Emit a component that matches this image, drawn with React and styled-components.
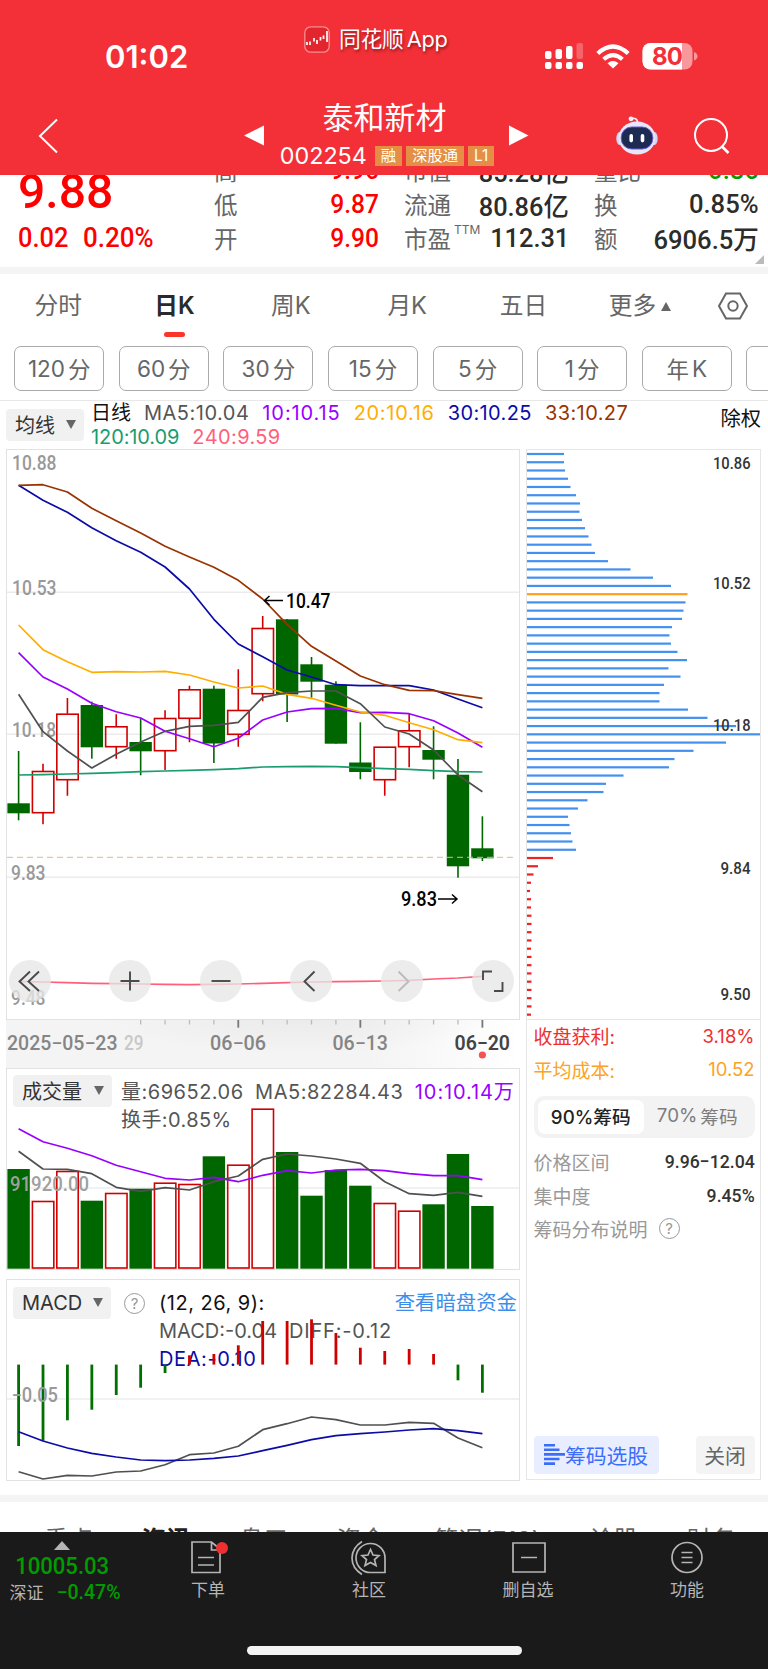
import React from 'react';
import styled, { createGlobalStyle } from 'styled-components';

const GlobalStyle = createGlobalStyle`
    * {
        box-sizing: border-box;
    }
    body {
        margin: 0;
        background: #fff;
        font-family: Inter, "Noto Sans CJK SC", sans-serif;
        color: #333;
    }
`;

const UP = '#d10000';
const DOWN = '#006600';

// x of the first candle and distance between candles
const FIRST_X = 18.6;
const STEP = 24.41;
const candleX = (i) => FIRST_X + i * STEP;

// [direction, high, top of body, bottom of body, low]
const candles = [
    ['down', 751, 803.3, 813.3, 820.3],
    ['up', 763.7, 771, 812.7, 824.3],
    ['up', 698, 713.7, 779.7, 795.7],
    ['down', 701.7, 705, 747.3, 758.7],
    ['up', 714.3, 726.3, 746.7, 758.7],
    ['down', 718.3, 742, 751.3, 775.3],
    ['up', 710.3, 718, 750.7, 770],
    ['up', 685.7, 689.3, 718.3, 742.3],
    ['down', 685.7, 688.7, 743.5, 763],
    ['up', 669.3, 710, 734.3, 746.7],
    ['up', 616, 628, 693.7, 701.3],
    ['down', 619, 619.3, 694.5, 722],
    ['down', 657, 664.3, 681.7, 697.7],
    ['down', 681.3, 684.7, 743.7, 743.7],
    ['down', 722.3, 762.5, 772, 779.3],
    ['up', 746.7, 746.7, 779.7, 795.7],
    ['up', 713.7, 730.3, 746.7, 767.3],
    ['down', 726.3, 750, 759.7, 779.3],
    ['down', 759, 774.7, 866.3, 877.7],
    ['down', 816.3, 848.3, 858.3, 861],
];

const averages = [
    { color: '#9900ff', y: [652.7, 677, 689, 703.3, 711.7, 718, 731.3, 738.7, 746.7, 738.3, 720, 712, 708.7, 708.3, 712.7, 712.3, 713.7, 720.7, 733, 747.3] },
    { color: '#1a9c6e', y: [775, 774.7, 774, 773.3, 772.7, 771.7, 771, 770.3, 769.7, 768.7, 767, 766.7, 766.3, 766.7, 767.7, 768.7, 769.3, 770.7, 771.7, 772] },
    { color: '#0b0ba8', y: [485.3, 500.3, 512.3, 527.7, 540.7, 552.3, 567, 589, 619.3, 644, 656.7, 670, 677, 684.7, 685.7, 685.7, 685.7, 690, 699, 707.7] },
    { color: '#993300', y: [485.3, 484.7, 492, 508.3, 520.7, 533, 546.3, 557, 567.3, 580.3, 599, 624.3, 646.3, 661, 676, 684.7, 690.3, 690.7, 694.7, 698.3] },
    { color: '#ffae00', y: [625, 649.7, 661.7, 672.3, 671.7, 672, 671.3, 675, 682, 688, 686, 694.3, 698.3, 705.3, 712, 715.3, 722.7, 729.7, 739.7, 742.7] },
    { color: '#505050', y: [694.3, 731.7, 751, 768, 754.3, 742, 731.3, 726.3, 725.3, 722.3, 697.3, 692.7, 691, 691, 703.7, 727, 734, 750, 775, 791.7] },
    { color: '#ff5f7a', y: [981.3, 982, 982.7, 983.3, 983.7, 984, 984.3, 984.7, 984.3, 984, 983.3, 982.7, 982, 981.7, 981.3, 981, 980.3, 979, 978, 976.3] },
];

const volumes = [
    ['down', 1169], ['up', 1201], ['up', 1171], ['down', 1200.7], ['up', 1193],
    ['down', 1188.7], ['up', 1182.7], ['up', 1184], ['down', 1156.3], ['up', 1164.7],
    ['up', 1108.7], ['down', 1152], ['down', 1195.7], ['down', 1170], ['down', 1185.7],
    ['up', 1203], ['up', 1210.7], ['down', 1204.3], ['down', 1154], ['down', 1206],
];
const volumeMa10 = [1128.7, 1141.7, 1148.3, 1155.7, 1165.3, 1171.7, 1178.3, 1180, 1177.3, 1181.7, 1175.3, 1170.7, 1173, 1170, 1169.3, 1170.7, 1173.7, 1175.7, 1175.7, 1179.7];
const volumeMa5 = [1151.3, 1169, 1169.3, 1173.7, 1187.3, 1191.3, 1187.7, 1190, 1181.7, 1176, 1159.3, 1154, 1156, 1159, 1163.3, 1181.7, 1193.7, 1195.3, 1192.3, 1196.3];

const macdEnds = [1446, 1440.7, 1420.3, 1409.7, 1395, 1387.7, 1373, 1355.3, 1354, 1345.3, 1321, 1321, 1319.3, 1333, 1347.7, 1351, 1349, 1354, 1380.3, 1392.7];
const diff = [1471.7, 1479, 1475.3, 1476, 1472, 1471, 1464.7, 1454.7, 1453, 1446.3, 1429.7, 1423.7, 1417, 1419.7, 1425, 1425, 1422.3, 1423.3, 1438, 1447.7];
const dea = [1431.7, 1441, 1448, 1453.3, 1457, 1460, 1460.7, 1460, 1458.3, 1456, 1450.7, 1445.3, 1439.7, 1435.7, 1433.7, 1432, 1430, 1428.7, 1430.7, 1433.7];

const chips = [
    37, 37, 38, 41, 43.5, 49, 53, 52.5, 55, 58, 61.5, 64.5, 68, 81, 103.5, 126, 144, 160.5, 158.5, 156.5,
    155, 145, 142.5, 144, 150.5, 160, 141.5, 153.5, 137, 132.5, 132.5, 161, 180.5, 209, 234, 199, 166.5,
    147.5, 142, 96.5, 79, 76.5, 60.5, 51, 41, 42.5, 44, 45.5, 49, 26, 11, 6.5, 4, 3, 4, 4, 4.5, 4.5, 4.5,
    4.5, 4, 4.5, 4.5, 4.5, 4.5, 4.5, 4.5, 4.5, 4,
];
const AVG_COST_INDEX = 17;
const FIRST_PROFIT_INDEX = 49;

const chipColor = (i) => {
    if (i === AVG_COST_INDEX) return '#ff9f1a';
    return i >= FIRST_PROFIT_INDEX ? '#ee2424' : '#4390ef';
};

const quoteColumns = [
    { width: 164.5, start: 22, stretch: 0.92, rows: [['高', '9.96', '#fe0000'], ['低', '9.87', '#fe0000'], ['开', '9.90', '#fe0000']] },
    { width: 165, start: 25.5, stretch: 0.95, rows: [['市值', '85.28亿'], ['流通', '80.86亿'], ['市盈', '112.31', '', 'TTM']] },
    { width: 165, start: 25, stretch: 0.96, rows: [['量比', '0.86', '#009c00'], ['换', '0.85%'], ['额', '6906.5万']] },
];

const Page = styled.div`
    display: flex;
    flex-direction: column;
    width: 768px;
    height: 1669px;
    overflow: hidden;
    background: #fff;
`;

// Narrow numerals
const Din = styled.span`
    display: inline-block;
    font-family: Roboto, "Noto Sans CJK SC", sans-serif;
    font-weight: 500;
    white-space: nowrap;
    transform: scaleX(${(p) => p.$k || 0.9});
    transform-origin: ${(p) => p.$from || 'left'} center;
`;

const Header = styled.header`
    height: 175px;
    background: #f33038;
    color: #fff;
    flex: none;
`;

const StatusBar = styled.div`
    display: flex;
    height: 92px;
    padding-left: 105px;
`;

const Clock = styled.div`
    width: 199px;
    padding-top: 22px;
    font-size: 31px;
    line-height: 70px;
    font-weight: 600;
`;

const AppBadge = styled.div`
    display: flex;
    align-items: center;
    height: 52px;
    margin-top: 13px;
    width: 240px;
    gap: 9px;
    font-size: 21.8px;
    letter-spacing: -0.3px;
    word-spacing: -2.5px;
    line-height: 26px;
    text-shadow: 1px 2px 3px rgba(80, 0, 0, 0.6);
`;

const StatusIcons = styled.svg`
    margin-top: 38px;
`;

const NavBar = styled.div`
    display: flex;
    align-items: center;
    height: 83px;
`;

const BackButton = styled.div`
    display: flex;
    width: 243px;
    padding: 5px 0 0 38px;
`;

const StockTitle = styled.div`
    width: 244px;
    display: flex;
    flex-direction: column;
    align-items: center;
    align-self: flex-start;
`;

const StockName = styled.div`
    font-size: 31px;
    line-height: 36px;
    padding: 8px 5px 0 0;
    height: 46px;
`;

const StockCode = styled.div`
    display: flex;
    align-items: center;
    gap: 4px;
    font-size: 23.3px;
    line-height: 26px;
    height: 36px;
    & > span:first-child {
        margin-right: 4px;
    }
`;

const Tag = styled.span`
    background: #e48f45;
    font-size: 15.3px;
    line-height: 19px;
    height: 20px;
    padding: 0 6px;
`;

const NavIcons = styled.div`
    display: flex;
    align-items: center;
    padding: 5px 0 0 87px;
    gap: 36px;
`;

const Quote = styled.section`
    display: flex;
    position: relative;
    height: 92px;
    overflow: hidden;
    flex: none;
`;

const QuoteMain = styled.div`
    width: 192px;
    color: #fe0000;
    padding-left: 18px;
    flex: none;
`;

const LastPrice = styled.div`
    height: 50px;
    margin-top: -12px;
    font-size: 49px;
    line-height: 56px;
`;

const Change = styled.div`
    display: flex;
    margin-top: 9px;
    font-size: 27px;
    line-height: 33px;
    & > span:first-child {
        width: 65px;
    }
`;

const QuoteColumn = styled.div`
    width: ${(p) => p.$width}px;
    margin: -21.5px 0 0 ${(p) => p.$start}px;
    flex: none;
`;

const QuoteRow = styled.div`
    display: flex;
    align-items: center;
    justify-content: space-between;
    height: 33.7px;
    font-size: 23.5px;
    color: #666;
    sup {
        font-size: 12px;
        font-weight: 400;
        align-self: flex-start;
        line-height: 17px;
        margin-right: auto;
        padding-left: 3px;
    }
    ${Din} {
        font-size: 26.7px;
        color: ${(p) => p.$color || '#2c2c2c'};
        margin-left: -20px;
    }
`;

const Corner = styled.i`
    position: absolute;
    right: 4px;
    bottom: 3px;
    border-left: 9px solid transparent;
    border-bottom: 9px solid #bbb;
`;

const Band = styled.div`
    height: 7px;
    background: #f4f4f4;
    flex: none;
`;

const PeriodTabs = styled.nav`
    display: flex;
    align-items: center;
    height: 64px;
    flex: none;
`;

const PeriodTab = styled.div`
    width: 116.4px;
    height: 64px;
    display: flex;
    flex-direction: column;
    align-items: center;
    padding-top: 15px;
    font-size: 23.7px;
    line-height: 34px;
    color: ${(p) => (p.$active ? '#2a2a2a' : '#666')};
    font-weight: ${(p) => (p.$active ? 600 : 400)};
    &::after {
        content: '';
        width: 21px;
        height: 5px;
        margin-top: 9px;
        border-radius: 3px;
        background: ${(p) => (p.$active ? '#fb3529' : 'transparent')};
    }
`;

const More = styled.div`
    display: flex;
    align-items: center;
    gap: 5px;
`;

const Triangle = styled.i`
    border: ${(p) => p.$size || 5.5}px solid transparent;
    ${(p) => (p.$up ? 'border-top: 0' : 'border-bottom: 0')};
    border-${(p) => (p.$up ? 'bottom' : 'top')}: ${(p) => p.$h || 9}px solid ${(p) => p.$color || '#666'};
`;

const MinuteRow = styled.div`
    display: flex;
    gap: 14.6px;
    height: 63px;
    padding: 8px 0 0 14.2px;
    border-bottom: 1px solid #e8e8e8;
    overflow: hidden;
    flex: none;
`;

const MinutePill = styled.div`
    width: 90px;
    height: 45px;
    flex: none;
    border: 1px solid #aaa;
    border-radius: 7px;
    display: flex;
    align-items: center;
    justify-content: center;
    gap: 3px;
    padding-bottom: 1px;
    font-size: 22.5px;
    color: #666;
`;

const AverageBar = styled.div`
    display: flex;
    height: 48px;
    padding-left: 6px;
    flex: none;
`;

const Picker = styled.div`
    display: flex;
    align-items: center;
    justify-content: space-between;
    width: ${(p) => p.$width}px;
    height: 32px;
    margin-top: ${(p) => p.$top || 0}px;
    padding: 0 8px 1px 9px;
    border-radius: 4px;
    background: #f1f1f1;
    font-size: 20px;
    color: #333;
    flex: none;
`;

const AverageValues = styled.div`
    display: flex;
    flex-wrap: wrap;
    width: 610px;
    column-gap: 13px;
    padding-left: 7px;
    font-size: 20px;
    line-height: 24px;
`;

const Value = styled.span`
    color: ${(p) => p.$color || '#555'};
    letter-spacing: ${(p) => p.$spacing || 0}px;
    white-space: nowrap;
`;

const Rights = styled.div`
    margin-left: auto;
    padding-right: 7px;
    font-size: 20.3px;
    line-height: 35px;
    color: #111;
`;

const Charts = styled.main`
    display: grid;
    grid-template-columns: 514px 235px;
    column-gap: 6px;
    height: 1046px;
    padding-left: 6px;
    flex: none;
    align-items: start;
`;

const Panel = styled.section`
    position: relative;
    height: ${(p) => p.$height}px;
    border: 1px solid #e2e2e2;
    margin-top: ${(p) => p.$gap || 0}px;
`;

const Plot = styled.svg`
    position: absolute;
    left: -1px;
    top: -1px;
    font-family: Roboto, sans-serif;
    font-size: 19.5px;
`;

const Controls = styled.div`
    position: absolute;
    left: 2px;
    right: 5px;
    bottom: 17px;
    display: flex;
    justify-content: space-between;
`;

const ControlButton = styled.div`
    width: 42px;
    height: 42px;
    border-radius: 50%;
    background: rgba(231, 231, 231, 0.78);
    color: ${(p) => (p.$muted ? '#bbb' : '#4a4a4a')};
    margin-left: ${(p) => p.$shift || 0}px;
`;

const DateAxis = styled.div`
    height: 48px;
    background: radial-gradient(ellipse 190px 34px at 290px 0, #ebebeb, rgba(240, 240, 240, 0)), linear-gradient(90deg, #f4f4f4 70%, #fff);
    svg {
        display: block;
        font-family: Roboto, sans-serif;
        font-size: 19.5px;
    }
`;

const IndicatorHead = styled.div`
    position: relative;
    display: flex;
    align-items: flex-start;
    padding: ${(p) => p.$top}px 1px 0 6px;
`;

const IndicatorValues = styled.div`
    display: flex;
    flex-wrap: wrap;
    flex: 1;
    column-gap: ${(p) => p.$gap || 12}px;
    padding-left: ${(p) => p.$left || 9}px;
    margin: ${(p) => p.$top || 0}px ${(p) => p.$right || 0}px 0 0;
    font-size: 20px;
    line-height: 28px;
`;

const Break = styled.i`
    flex-basis: 100%;
`;

const HelpMark = styled.span`
    width: 21px;
    height: 21px;
    border: 1.5px solid #999;
    border-radius: 50%;
    color: #999;
    font-size: 15px;
    line-height: 19px;
    text-align: center;
    flex: none;
    margin: ${(p) => p.$margin};
`;

const DarkPool = styled.span`
    font-size: 20.4px;
    line-height: 28px;
    color: #3d8eea;
    margin-left: auto;
    padding-right: 1px;
`;

const ChipPanel = styled.aside`
    position: relative;
    display: flex;
    flex-direction: column;
    height: 1031px;
    border: 1px solid #e6e6e6;
`;

const ChipProfile = styled.div`
    height: 570px;
    border-bottom: 1px solid #e6e6e6;
    svg {
        display: block;
        font-family: Roboto, sans-serif;
        font-size: 17.3px;
    }
`;

const ChipStats = styled.div`
    display: flex;
    flex-direction: column;
    flex: 1;
    padding: 0 5.5px 5px 6.5px;
`;

const StatRow = styled.div`
    display: flex;
    align-items: center;
    justify-content: ${(p) => (p.$start ? 'flex-start' : 'space-between')};
    height: 33.4px;
    padding-bottom: 1.5px;
    font-size: 19px;
    color: ${(p) => p.$color || '#999'};
    span:last-child {
        font-size: ${(p) => p.$valueSize || 18.5}px;
    }
    ${Din} {
        color: #333;
    }
`;

const Segmented = styled.div`
    display: flex;
    height: 42px;
    padding: 4px;
    margin: 9px 0 8px;
    border-radius: 10px;
    background: #f3f3f3;
    font-size: 18.7px;
`;

const Segment = styled.div`
    width: 107px;
    display: flex;
    align-items: center;
    justify-content: center;
    padding-bottom: 3px;
    gap: ${(p) => (p.$active ? 0 : 3)}px;
    border-radius: 7px;
    background: ${(p) => (p.$active ? '#fff' : 'transparent')};
    color: ${(p) => (p.$active ? '#222' : '#7d7d7d')};
    font-weight: ${(p) => (p.$active ? 500 : 400)};
`;

const ChipActions = styled.div`
    display: flex;
    justify-content: space-between;
    margin-top: auto;
`;

const ActionButton = styled.div`
    display: flex;
    align-items: center;
    justify-content: center;
    width: ${(p) => p.$width}px;
    height: 38px;
    padding-bottom: 1px;
    border-radius: 4px;
    font-size: 20.8px;
    background: ${(p) => (p.$primary ? '#e8eeff' : '#f4f4f4')};
    color: ${(p) => (p.$primary ? '#3b6dfa' : '#666')};
`;

const NewsTabs = styled.div`
    display: flex;
    gap: 48.5px;
    height: 30px;
    padding: 20.5px 0 0 44px;
    overflow: hidden;
    font-size: 24.5px;
    line-height: 34px;
    color: #666;
    white-space: nowrap;
    flex: none;
    b {
        color: #222;
        font-weight: 700;
    }
`;

const BottomBar = styled.footer`
    position: relative;
    display: flex;
    height: 137px;
    background: #1a1a1a;
    color: #b5b5b5;
    flex: none;
`;

const IndexBox = styled.div`
    width: 128px;
    display: flex;
    flex-direction: column;
    align-items: center;
    padding: 9px 4px 0 0;
    color: #009c00;
`;

const IndexValue = styled(Din)`
    font-size: 24.5px;
    line-height: 30px;
    margin-top: 1px;
`;

const IndexChange = styled.div`
    display: flex;
    align-items: center;
    gap: 13px;
    font-size: 17px;
    line-height: 24px;
    color: #b5b5b5;
    padding-left: 6px;
    ${Din} {
        font-size: 19.5px;
        color: #009c00;
    }
`;

const BarItem = styled.div`
    width: ${(p) => p.$width}px;
    display: flex;
    flex-direction: column;
    align-items: center;
    padding-top: 7px;
    font-size: 17px;
    line-height: 27px;
`;

const HomeIndicator = styled.i`
    position: absolute;
    left: 247px;
    bottom: 14px;
    width: 275px;
    height: 9px;
    border-radius: 5px;
    background: #f4f4f4;
`;

function Curve({ points, color, width = 1.7 }) {
    const d = points.map((y, i) => `${candleX(i).toFixed(1)},${y}`).join(' ');
    return <polyline points={d} fill="none" stroke={color} strokeWidth={width} strokeLinejoin="round" />;
}

function PlotText({ x, y, w, color = '#999', weight = 500, children }) {
    return (
        <text x={x} y={y} textLength={w} lengthAdjust="spacingAndGlyphs" fill={color} fontWeight={weight}>
            {children}
        </text>
    );
}

function Candle({ index, data }) {
    const [dir, high, top, bottom, low] = data;
    const x = candleX(index);
    if (dir === 'down') {
        return (
            <g fill={DOWN}>
                <rect x={x - 0.8} y={high} width="1.6" height={low - high} />
                <rect x={x - 11.2} y={top} width="22.4" height={bottom - top} />
            </g>
        );
    }
    return (
        <g fill="none" stroke={UP} strokeWidth="1.6">
            <path d={`M${x} ${high}V${top}M${x} ${bottom}V${low}`} />
            <rect x={x - 10.6} y={top + 0.5} width="21.4" height={bottom - top - 0.5} />
        </g>
    );
}

function PriceChart() {
    return (
        <Panel $height={571}>
            <Plot width="514" height="571" viewBox="6 449 514 571">
                <path d="M7 592.3H519M7 734.3H519M7 877.3H519" stroke="#ececec" strokeWidth="1.4" />
                <PlotText x={12} y={737} w={44}>10.18</PlotText>
                {candles.map((c, i) => <Candle key={i} index={i} data={c} />)}
                {averages.map((a) => <Curve key={a.color} points={a.y} color={a.color} />)}
                <path d="M7 857.3H515" stroke="#d9b896" strokeWidth="1" strokeDasharray="6 4" />
                <PlotText x={12} y={470} w={44.5}>10.88</PlotText>
                <PlotText x={12} y={595} w={44.5}>10.53</PlotText>
                <PlotText x={11} y={879.5} w={34.5}>9.83</PlotText>
                <PlotText x={11} y={1004.5} w={34.5}>9.48</PlotText>
                <path d="M283 600.5H265M269.5 596L264.5 600.5L269.5 605" fill="none" stroke="#000" strokeWidth="1.5" />
                <PlotText x={286} y={607.5} w={44.5} color="#000">10.47</PlotText>
                <path d="M438 899H456.5M452 894.5L457 899L452 903.5" fill="none" stroke="#000" strokeWidth="1.5" />
                <PlotText x={401} y={906} w={36} color="#000">9.83</PlotText>
            </Plot>
            <Controls>
                {['rewind', 'plus', 'minus', 'prev', 'next', 'full'].map((name) => (
                    <ControlButton key={name} $muted={name === 'next'} $shift={name === 'plus' ? 9 : 0}>
                        <ControlIcon name={name} />
                    </ControlButton>
                ))}
            </Controls>
        </Panel>
    );
}

function ControlIcon({ name }) {
    const paths = {
        rewind: 'M21 11.5L10.5 21.5L21 31M30 11.5L19.5 21.5L30 31',
        plus: 'M11.5 21H30.5M21 11.5V30.5',
        minus: 'M11.5 21H30.5',
        prev: 'M24.5 11.5L14.5 21.5L24.5 31',
        next: 'M17.5 11.5L27.5 21.5L17.5 31',
        full: 'M11 20V11.5H20M30.5 22V31H22',
    };
    return (
        <svg width="42" height="42" viewBox="0 0 42 42" fill="none" stroke="currentColor" strokeWidth="1.9">
            <path d={paths[name]} />
        </svg>
    );
}

function Dates() {
    return (
        <DateAxis>
            <svg width="514" height="48" viewBox="6 1020 514 48">
                {candles.map((c, i) => {
                    if (i < 5) return null;
                    const major = i === 9 || i === 14 || i === 19;
                    return (
                        <path
                            key={i}
                            d={`M${candleX(i)} 1020V${major ? 1027.7 : 1024.5}`}
                            stroke={major ? '#777' : '#bbb'}
                            strokeWidth={major ? 1.8 : 1.3}
                        />
                    );
                })}
                <PlotText x={7} y={1049.7} w={110.5} color="#858585">2025−05−23</PlotText>
                <PlotText x={124} y={1049.7} w={19.5} color="#c8c8c8">29</PlotText>
                <PlotText x={210} y={1049.7} w={56} color="#858585">06−06</PlotText>
                <PlotText x={332.5} y={1049.7} w={55.5} color="#858585">06−13</PlotText>
                <PlotText x={454.5} y={1049.7} w={55.5} color="#444" weight={600}>06−20</PlotText>
                <circle cx="482.4" cy="1055" r="3.6" fill="#f25555" />
            </svg>
        </DateAxis>
    );
}

function VolumeChart() {
    return (
        <Panel $height={202}>
            <Plot width="514" height="202" viewBox="6 1068 514 202">
                <path d="M7 1188H519" stroke="#ececec" strokeWidth="1.4" />
                {volumes.map(([dir, top], i) => (
                    dir === 'down'
                        ? <rect key={i} x={candleX(i) - 11.2} y={top} width="22.4" height={1268.7 - top} fill={DOWN} />
                        : <rect key={i} x={candleX(i) - 10.6} y={top + 0.5} width="21.4" height={1267.5 - top} fill="none" stroke={UP} strokeWidth="1.6" />
                ))}
                <Curve points={volumeMa10} color="#9900ff" />
                <Curve points={volumeMa5} color="#505050" />
                <PlotText x={10} y={1191} w={79} color="#a0a0a0">91920.00</PlotText>
            </Plot>
            <IndicatorHead $top={6}>
                <Picker $width={99}>成交量<Triangle /></Picker>
                <IndicatorValues $top={2.5} $gap={11.5} $right={-20}>
                    <Value $spacing={0.5}>量:69652.06</Value>
                    <Value $spacing={0.5}>MA5:82284.43</Value>
                    <Value $color="#9900ff" $spacing={0.9}>10:10.14万</Value>
                    <Break />
                    <Value $spacing={0.4}>换手:0.85%</Value>
                </IndicatorValues>
            </IndicatorHead>
        </Panel>
    );
}

function MacdChart() {
    return (
        <Panel $height={202} $gap={9}>
            <IndicatorHead $top={7}>
                <Picker $width={98}>MACD<Triangle /></Picker>
                <HelpMark $margin="6px 0 0 13px">?</HelpMark>
                <IndicatorValues $left={14} $top={2}>
                    <Value $color="#111" $spacing={0.5}>(12, 26, 9):</Value>
                    <DarkPool>查看暗盘资金</DarkPool>
                    <Break />
                    <Value>MACD:-0.04</Value>
                    <Value $spacing={0.8}>DIFF:-0.12</Value>
                    <Break />
                    <Value $color="#0b0ba8" $spacing={0.6}>DEA:-0.10</Value>
                </IndicatorValues>
            </IndicatorHead>
            <Plot width="514" height="202" viewBox="6 1279 514 202">
                <path d="M7 1399H519" stroke="#ececec" strokeWidth="1.4" />
                {macdEnds.map((y, i) => (
                    <rect
                        key={i}
                        x={candleX(i) - 1.4}
                        y={Math.min(y, 1364.6)}
                        width="2.8"
                        height={Math.abs(y - 1364.6)}
                        fill={y > 1364.6 ? '#007000' : UP}
                    />
                ))}
                <Curve points={diff} color="#505050" />
                <Curve points={dea} color="#0b0ba8" />
                <PlotText x={11.5} y={1402} w={46.5}>−0.05</PlotText>
            </Plot>
        </Panel>
    );
}

function ChipDistribution() {
    return (
        <ChipPanel>
            <ChipProfile>
                <svg width="233" height="569" viewBox="527 450 233 569">
                    {chips.map((w, i) => (
                        <rect key={i} x="527" y={452.9 + i * 8.245} width={w} height="2.2" fill={chipColor(i)} />
                    ))}
                    <PlotText x={713} y={469.3} w={37.5} color="#333">10.86</PlotText>
                    <PlotText x={713} y={588.7} w={37.5} color="#333">10.52</PlotText>
                    <PlotText x={713} y={731.3} w={37.5} color="#333">10.18</PlotText>
                    <PlotText x={720.5} y={873.5} w={30} color="#333">9.84</PlotText>
                    <PlotText x={720.5} y={1000} w={30} color="#333">9.50</PlotText>
                </svg>
            </ChipProfile>
            <ChipStats>
                <StatRow $color="#ee2f2f"><span>收盘获利:</span><span>3.18%</span></StatRow>
                <StatRow $color="#fca326"><span>平均成本:</span><span>10.52</span></StatRow>
                <Segmented>
                    <Segment $active>90%筹码</Segment>
                    <Segment><span>70%</span><span>筹码</span></Segment>
                </Segmented>
                <StatRow $valueSize={19}><span>价格区间</span><Din $from="right" $k={0.93}>9.96−12.04</Din></StatRow>
                <StatRow $valueSize={19}><span>集中度</span><Din $from="right" $k={0.93}>9.45%</Din></StatRow>
                <StatRow $start $valueSize={15}>
                    筹码分布说明
                    <HelpMark $margin="0 0 0 11px">?</HelpMark>
                </StatRow>
                <ChipActions>
                    <ActionButton $primary $width={125}>
                        <svg width="21" height="21" viewBox="0 0 21 21" stroke="currentColor" strokeWidth="2.6">
                            <path d="M0 1.3H11M0 5.8H15.5M0 10.4H21M0 15H15.5M0 19.6H11" />
                        </svg>
                        筹码选股
                    </ActionButton>
                    <ActionButton $width={59}>关闭</ActionButton>
                </ChipActions>
            </ChipStats>
        </ChipPanel>
    );
}

function RobotIcon() {
    return (
        <svg width="42" height="40" viewBox="0 0 42 40">
            <path d="M15 3Q21 1 21.5 6" fill="none" stroke="#e8eaf6" strokeWidth="1.8" />
            <circle cx="15" cy="2.8" r="2.4" fill="#f2f3fb" />
            <ellipse cx="3.5" cy="22.5" rx="3.2" ry="6.5" fill="#cfd6f5" />
            <ellipse cx="38.5" cy="22.5" rx="3.2" ry="6.5" fill="#cfd6f5" />
            <ellipse cx="21" cy="22" rx="18.5" ry="16.6" fill="#e6e8f7" />
            <rect x="5.2" y="11" width="31.6" height="22" rx="10.5" fill="#1d2a52" stroke="#6a58d8" strokeWidth="1" />
            <rect x="13.4" y="18" width="3.6" height="8.4" rx="1.8" fill="#fff" />
            <rect x="24.7" y="18" width="3.6" height="8.4" rx="1.8" fill="#fff" />
        </svg>
    );
}

function TopHeader() {
    return (
        <Header>
            <StatusBar>
                <Clock>01:02</Clock>
                <AppBadge>
                    <svg width="26" height="27" viewBox="0 0 26 27">
                        <rect x="0.8" y="0.8" width="24.4" height="25.4" rx="6" fill="#e3262e" stroke="#f98d90" strokeWidth="1.3" />
                        <path d="M3 16V19M6 15.5V19M10 12V15.5M13 14V18M16.5 11V14.5M19.5 9.5V13M23 5V16" stroke="#fff" strokeWidth="1.7" />
                    </svg>
                    <span>同花顺 App</span>
                </AppBadge>
                <StatusIcons width="156" height="36" viewBox="544 38 156 36" fill="#fff">
                    <rect x="545" y="51" width="6.5" height="8" rx="2" />
                    <rect x="555.5" y="49" width="6.5" height="10" rx="2" />
                    <rect x="566" y="46" width="6.5" height="13" rx="2" />
                    <rect x="576.5" y="43" width="6.5" height="16" rx="2" opacity="0.25" />
                    <rect x="545" y="62" width="6.5" height="7" rx="2" />
                    <rect x="555.5" y="62" width="6.5" height="7" rx="2" />
                    <rect x="566" y="62" width="6.5" height="7" rx="2" />
                    <rect x="576.5" y="62" width="6.5" height="7" rx="2" />
                    <g fill="none" stroke="#fff" strokeWidth="4.2">
                        <path d="M597.8 53.5Q613 39.5 628.2 53.5" />
                        <path d="M603.6 59.3Q613 51 622.4 59.3" />
                    </g>
                    <path d="M613 68.5L607.5 63.2Q613 58.6 618.5 63.2Z" />
                    <rect x="642.5" y="43" width="50" height="26.5" rx="8" opacity="0.5" />
                    <path d="M650.5 43H682V69.5H650.5A8 8 0 0 1 642.5 61.5V51A8 8 0 0 1 650.5 43Z" />
                    <path d="M694 52Q697.5 53.5 697.5 56.2Q697.5 59 694 60.5Z" opacity="0.5" />
                    <text x="652" y="65" fontSize="24" fontWeight="700" fill="#f33038" textLength="31">80</text>
                </StatusIcons>
            </StatusBar>
            <NavBar>
                <BackButton>
                    <svg width="22" height="36" viewBox="0 0 22 36" fill="none" stroke="#fff" strokeWidth="2">
                        <path d="M19 1.5L2 18L19 34.5" />
                    </svg>
                </BackButton>
                <svg width="22" height="24" viewBox="0 0 22 24"><path d="M1 13.5L21 3.5V23.5Z" fill="#fff" /></svg>
                <StockTitle>
                    <StockName>泰和新材</StockName>
                    <StockCode>
                        <span>002254</span>
                        <Tag>融</Tag>
                        <Tag>深股通</Tag>
                        <Tag>L1</Tag>
                    </StockCode>
                </StockTitle>
                <svg width="20" height="24" viewBox="0 0 20 24"><path d="M19.5 13.5L0 3.5V23.5Z" fill="#fff" /></svg>
                <NavIcons>
                    <RobotIcon />
                    <svg width="36" height="36" viewBox="0 0 36 36" fill="none" stroke="#fff" strokeWidth="2">
                        <circle cx="17" cy="17" r="16" />
                        <path d="M27.5 28L34.5 35" strokeWidth="2.6" />
                    </svg>
                </NavIcons>
            </NavBar>
        </Header>
    );
}

function QuoteSummary() {
    return (
        <Quote>
            <QuoteMain>
                <LastPrice><Din $k={0.98}>9.88</Din></LastPrice>
                <Change><Din $k={0.94}>0.02</Din><Din $k={0.96}>0.20%</Din></Change>
            </QuoteMain>
            {quoteColumns.map((col) => (
                <QuoteColumn key={col.rows[0][0]} $width={col.width} $start={col.start}>
                    {col.rows.map(([label, value, color, note]) => (
                        <QuoteRow key={label} $color={color}>
                            {label}
                            {note && <sup>{note}</sup>}
                            <Din $from="right" $k={col.stretch}>{value}</Din>
                        </QuoteRow>
                    ))}
                </QuoteColumn>
            ))}
            <Corner />
        </Quote>
    );
}

function Footer() {
    return (
        <BottomBar>
            <IndexBox>
                <Triangle $up $size={8} $color="#b5b5b5" />
                <IndexValue $from="center">10005.03</IndexValue>
                <IndexChange>深证<Din $k={1}>−0.47%</Din></IndexChange>
            </IndexBox>
            <BarItem $width={160}>
                <svg width="40" height="38" viewBox="0 0 40 38" fill="none" stroke="#b5b5b5" strokeWidth="1.7">
                    <path d="M4 3H23.5L32 10V33.5H4ZM23.5 3V11H32M10 18.5H26M10 26H26" />
                    <circle cx="34" cy="9" r="6" fill="#ee3030" stroke="none" />
                </svg>
                下单
            </BarItem>
            <BarItem $width={162}>
                <svg width="38" height="38" viewBox="0 0 38 38" fill="none" stroke="#b5b5b5" strokeWidth="1.7">
                    <path d="M35 19V33.5H21A14.5 14.5 0 1 1 35 19Z" />
                    <path d="M12 2.5Q2 9 2 19Q2 29 12 35.5" />
                    <path d="M20.5 10.5L23 16L29 16.6L24.5 20.6L26 26.5L20.5 23.4L15 26.5L16.5 20.6L12 16.6L18 16Z" />
                </svg>
                社区
            </BarItem>
            <BarItem $width={156}>
                <svg width="38" height="38" viewBox="0 0 38 38" fill="none" stroke="#b5b5b5" strokeWidth="1.7">
                    <path d="M4 4H36V33H4ZM12 18.5H28" />
                </svg>
                删自选
            </BarItem>
            <BarItem $width={162}>
                <svg width="38" height="38" viewBox="0 0 38 38" fill="none" stroke="#b5b5b5" strokeWidth="1.7">
                    <circle cx="19" cy="18.5" r="15" />
                    <path d="M13.5 13.5H24.5M13.5 18.5H24.5M13.5 23.5H24.5" />
                </svg>
                功能
            </BarItem>
            <HomeIndicator />
        </BottomBar>
    );
}

function App() {
    return (
        <Page>
            <GlobalStyle />
            <TopHeader />
            <QuoteSummary />
            <Band />
            <PeriodTabs>
                <PeriodTab>分时</PeriodTab>
                <PeriodTab $active>日K</PeriodTab>
                <PeriodTab>周K</PeriodTab>
                <PeriodTab>月K</PeriodTab>
                <PeriodTab>五日</PeriodTab>
                <PeriodTab>
                    <More>更多<Triangle $up /></More>
                </PeriodTab>
                <svg width="70" height="28" viewBox="-19 0 70 28" fill="none" stroke="#666" strokeWidth="2">
                    <path d="M9 1.5H23L30 14L23 26.5H9L2 14Z" />
                    <circle cx="16" cy="14" r="4.7" />
                </svg>
            </PeriodTabs>
            <MinuteRow>
                {['120 分', '60 分', '30 分', '15 分', '5 分', '1 分', '年 K', '季 K'].map((label) => (
                    <MinutePill key={label}>
                        {label.split(' ').map((part) => <span key={part}>{part}</span>)}
                    </MinutePill>
                ))}
            </MinuteRow>
            <AverageBar>
                <Picker $width={78} $top={8}>均线<Triangle /></Picker>
                <AverageValues>
                    <Value $color="#111">日线</Value>
                    <Value $spacing={0.5}>MA5:10.04</Value>
                    <Value $color="#9900ff" $spacing={0.9}>10:10.15</Value>
                    <Value $color="#ffae00" $spacing={0.7}>20:10.16</Value>
                    <Value $color="#0b0ba8" $spacing={0.4}>30:10.25</Value>
                    <Value $color="#993300" $spacing={0.4}>33:10.27</Value>
                    <Break />
                    <Value $color="#1a9c6e" $spacing={-0.1}>120:10.09</Value>
                    <Value $color="#ff5f7a" $spacing={0.4}>240:9.59</Value>
                </AverageValues>
                <Rights>除权</Rights>
            </AverageBar>
            <Charts>
                <div>
                    <PriceChart />
                    <Dates />
                    <VolumeChart />
                    <MacdChart />
                </div>
                <ChipDistribution />
            </Charts>
            <Band />
            <NewsTabs>
                <span>重点</span>
                <b>资讯</b>
                <span>盘口</span>
                <span>资金</span>
                <span>简况(F10)</span>
                <span>诊股</span>
                <span>财务</span>
            </NewsTabs>
            <Footer />
        </Page>
    );
}

export default App;
